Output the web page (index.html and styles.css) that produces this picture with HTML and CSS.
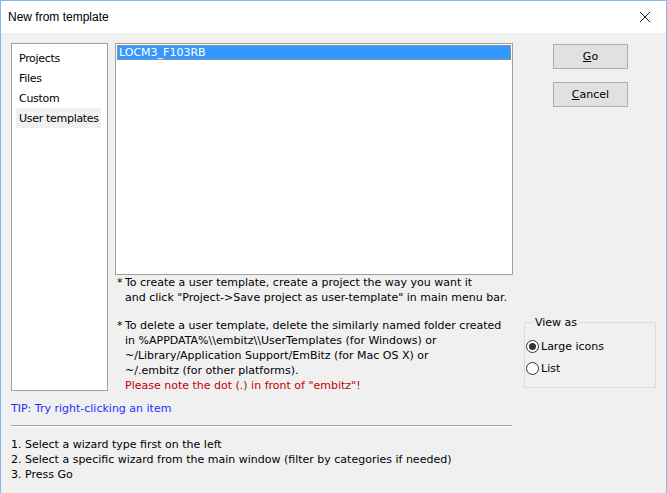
FILE: index.html
```html
<!DOCTYPE html>
<html>
<head>
<meta charset="utf-8">
<link rel="stylesheet" href="styles.css">
</head>
<body>
<div class="window">
  <div class="titlebar">
    <span class="title">New from template</span>
    <svg class="close" width="12" height="12" viewBox="0 0 12 12"><path d="M1 1 L11 11 M11 1 L1 11" stroke="#111" stroke-width="1" fill="none"/></svg>
  </div>
  <div class="content">
    <div class="top">
      <div class="cats">
        <div class="cat">Projects</div>
        <div class="cat">Files</div>
        <div class="cat">Custom</div>
        <div class="cat cat-sel">User templates</div>
      </div>
      <div class="middle">
        <div class="list">
          <div class="item item-sel">LOCM3_F103RB</div>
        </div>
        <div class="note">
          <span class="star">*</span>
          <div class="note-text">To create a user template, create a project the way you want it<br>and click "Project-&gt;Save project as user-template" in main menu bar.</div>
        </div>
        <div class="note note2">
          <span class="star">*</span>
          <div class="note-text">To delete a user template, delete the similarly named folder created<br>in %APPDATA%\\embitz\\UserTemplates (for Windows) or<br>~/Library/Application Support/EmBitz (for Mac OS X) or<br>~/.embitz (for other platforms).<br><span class="red">Please note the dot (.) in front of "embitz"!</span></div>
        </div>
      </div>
      <div class="side">
        <button class="btn"><u>G</u>o</button>
        <button class="btn btn2"><u>C</u>ancel</button>
        <fieldset class="group">
          <legend>View as</legend>
          <div class="radio-row"><span class="radio radio-on"></span>Large icons</div>
          <div class="radio-row"><span class="radio"></span>List</div>
        </fieldset>
      </div>
    </div>
    <div class="tip">TIP: Try right-clicking an item</div>
    <div class="sep"></div>
    <div class="steps">1. Select a wizard type first on the left<br>2. Select a specific wizard from the main window (filter by categories if needed)<br>3. Press Go</div>
  </div>
</div>
</body>
</html>
```
FILE: styles.css
```css
html, body {
  margin: 0;
  padding: 0;
  background: #f0f0f0;
}
body {
  font-family: "DejaVu Sans", Verdana, sans-serif;
  font-size: 11px;
  color: #000;
}
.window {
  width: 667px;
  height: 493px;
  box-sizing: border-box;
  border: 1px solid #84b8ea;
  border-bottom: none;
  background: #f0f0f0;
  overflow: hidden;
}
.titlebar {
  height: 32px;
  background: #fff;
  display: flex;
  align-items: center;
  justify-content: space-between;
}
.title {
  padding-left: 7px;
  font-family: "Liberation Sans", Arial, sans-serif;
  font-size: 12px;
  color: #000;
}
.close {
  margin-right: 15px;
}
.content {
  padding: 10px 0 0 10px;
}
.top {
  display: flex;
  height: 348px;
}
.cats {
  width: 97px;
  height: 348px;
  box-sizing: border-box;
  border: 1px solid #a0a0a0;
  background: #fff;
  padding: 4px 0 0 4px;
}
.cat {
  height: 20px;
  line-height: 21px;
  width: 85px;
  padding-left: 3px;
  box-sizing: border-box;
  white-space: nowrap;
  letter-spacing: -0.3px;
}
.cat-sel {
  background: #f0f0f0;
}
.middle {
  width: 398px;
  margin-left: 7px;
}
.list {
  height: 232px;
  box-sizing: border-box;
  border: 1px solid #a0a0a0;
  background: #fff;
  padding: 1px;
}
.item {
  height: 15px;
  line-height: 16px;
  padding-left: 2px;
}
.item-sel {
  background: #3399ff;
  color: #fff;
  outline: 1px dotted #d98c3a;
  outline-offset: -1px;
}
.note {
  display: flex;
  line-height: 15px;
  white-space: nowrap;
}
.note2 {
  margin-top: 13px;
}
.star {
  width: 10px;
  padding-left: 2px;
  box-sizing: border-box;
  flex: none;
}
.red {
  color: #c00000;
}
.side {
  width: 132px;
  margin-left: 11px;
  display: flex;
  flex-direction: column;
  align-items: center;
}
.btn {
  width: 75px;
  height: 25px;
  margin: 1px 0 0 1px;
  padding: 0;
  background: #e1e1e1;
  border: 1px solid #adadad;
  font-family: "DejaVu Sans", Verdana, sans-serif;
  font-size: 11px;
  color: #000;
}
.btn2 {
  margin-top: 13px;
}
.group {
  margin: auto 0 3px 0;
  width: 132px;
  height: 72px;
  box-sizing: border-box;
  border: 1px solid #dcdcdc;
  padding: 6px 0 0 1px;
}
.group legend {
  margin-left: 7px;
  padding: 0 2px;
  font-size: 11px;
}
.radio-row {
  display: flex;
  align-items: center;
  height: 22px;
}
.radio {
  width: 13px;
  height: 13px;
  box-sizing: border-box;
  border: 1px solid #333;
  border-radius: 50%;
  background: #fff;
  margin-right: 2px;
  display: flex;
  align-items: center;
  justify-content: center;
}
.radio-on::after {
  content: "";
  width: 7px;
  height: 7px;
  border-radius: 50%;
  background: #333;
}
.tip {
  margin-top: 10px;
  line-height: 15px;
  color: #2a2aff;
}
.sep {
  width: 501px;
  margin-top: 9px;
  border-top: 1px solid #a0a0a0;
  border-bottom: 1px solid #fff;
}
.steps {
  margin-top: 10px;
  line-height: 15px;
}
```
